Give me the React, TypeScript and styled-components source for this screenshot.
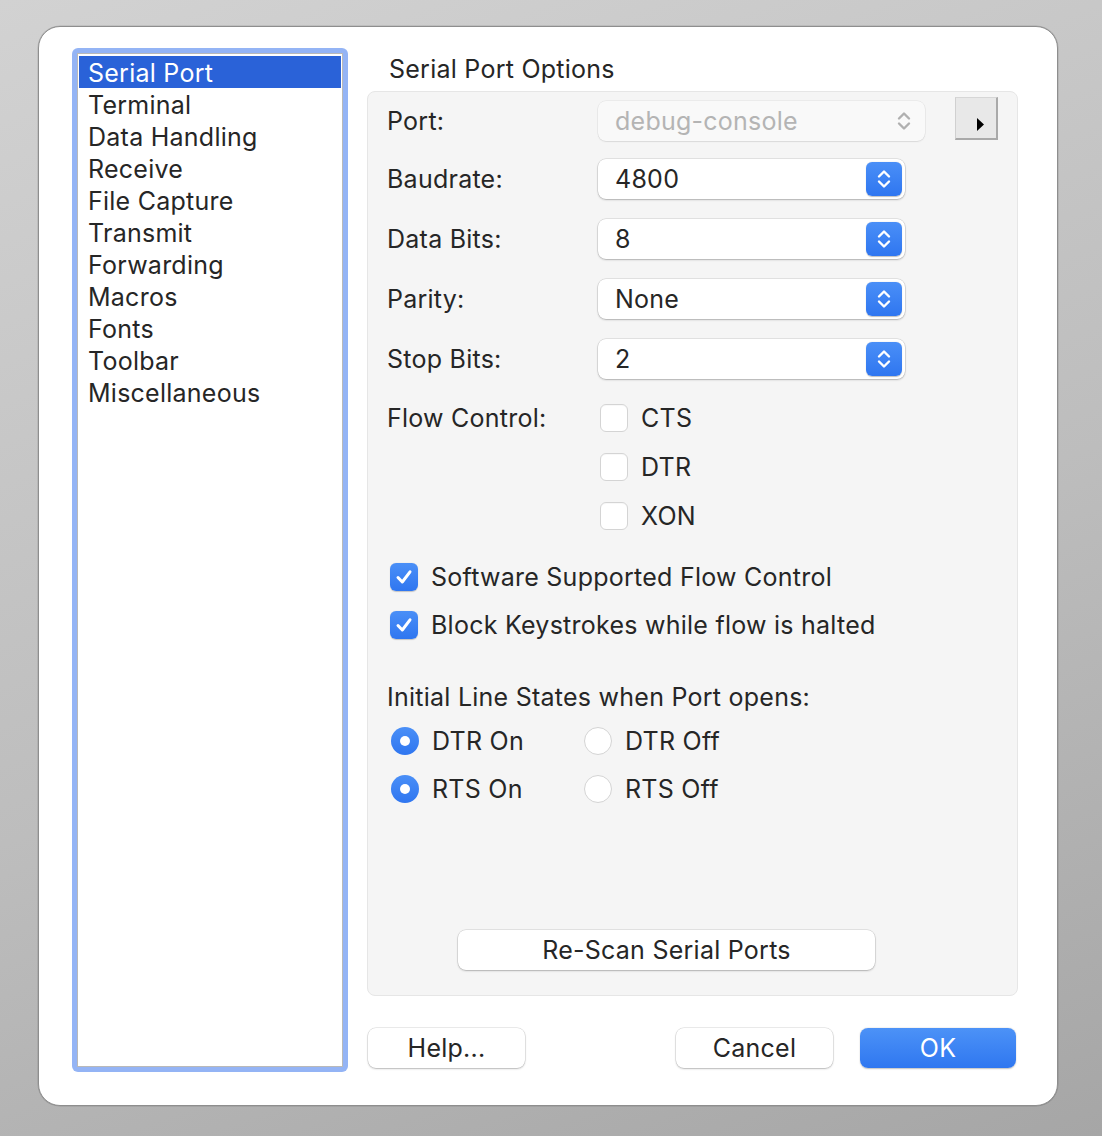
import React from "react"
import styled, { createGlobalStyle } from "styled-components"

const GlobalStyle = createGlobalStyle`
  html, body {
    margin: 0;
    padding: 0;
  }
  body {
    width: 1102px;
    height: 1136px;
    overflow: hidden;
    background: linear-gradient(160deg, #d2d2d2 0%, #bdbdbd 55%, #a6a6a6 100%);
    font-family: Inter, "Noto Sans", "Liberation Sans", sans-serif;
    letter-spacing: 0.25px;
    color: #262626;
  }
`

const Page = styled.div`
  padding: 26px 0 0 38px;
`

const Window = styled.div`
  box-sizing: border-box;
  width: 1020px;
  height: 1080px;
  background: #ffffff;
  border: 1px solid #8e8e8e;
  border-radius: 22px;
  padding: 21px 39px 33px 33px;
  display: flex;
  gap: 19px;
  box-shadow: 0 0 0 0.5px rgba(0, 0, 0, 0.15);
`

const SideRing = styled.div`
  box-sizing: border-box;
  width: 276px;
  height: 1024px;
  padding: 5px;
  border-radius: 6px;
  background: #94b4f5;
`

const SideList = styled.ul`
  box-sizing: border-box;
  height: 100%;
  margin: 0;
  padding: 2px 1px 1px;
  list-style: none;
  background: #ffffff;
  border: 1px solid #b9b9b9;
`

const SideItem = styled.li<{ selected?: boolean }>`
  box-sizing: border-box;
  height: 32px;
  line-height: 32px;
  padding: 1px 0 0 9px;
  font-size: 25px;
  background: ${p => (p.selected ? "#2a62d8" : "transparent")};
  color: ${p => (p.selected ? "#ffffff" : "#262626")};
  white-space: nowrap;
`

const Main = styled.div`
  width: 651px;
  display: flex;
  flex-direction: column;
`

const Title = styled.div`
  margin: 6px 0 7px 22px;
  height: 30px;
  line-height: 30px;
  font-size: 25px;
`

const Group = styled.div`
  box-sizing: border-box;
  height: 905px;
  background: #f5f5f5;
  border: 1px solid #e6e6e6;
  border-radius: 8px;
  display: flex;
  flex-direction: column;
  padding: 0 19px 25px 0;
`

const FormRow = styled.div<{ h?: number; top?: boolean }>`
  display: flex;
  align-items: ${p => (p.top ? "flex-start" : "center")};
  height: ${p => (p.h ? `${p.h}px` : "auto")};
  margin-top: ${p => (p.top ? "15px" : "0")};
`

const Label = styled.div`
  width: 230px;
  padding-left: 19px;
  box-sizing: border-box;
  font-size: 25px;
  line-height: 28px;
  flex-shrink: 0;
`

const Popup = styled.div<{ disabled?: boolean; w: number }>`
  box-sizing: border-box;
  width: ${p => p.w}px;
  height: 40px;
  border-radius: 8px;
  background: ${p => (p.disabled ? "#f9f9f9" : "#ffffff")};
  box-shadow: ${p =>
    p.disabled
      ? "0 0 0 0.5px rgba(0,0,0,0.08), 0 1px 1.5px rgba(0,0,0,0.08)"
      : "0 0 0 0.5px rgba(0,0,0,0.15), 0 1px 2px rgba(0,0,0,0.22)"};
  display: flex;
  align-items: center;
  padding: 0 3px 0 17px;
  font-size: 25px;
  color: ${p => (p.disabled ? "#b4b4b4" : "#262626")};
`

const PopupText = styled.span`
  flex: 1;
`

const Stepper = styled.span<{ disabled?: boolean }>`
  width: 36px;
  height: 34px;
  border-radius: 6px;
  display: flex;
  align-items: center;
  justify-content: center;
  background: ${p =>
    p.disabled ? "transparent" : "linear-gradient(#4a8ff7, #2f76f0)"};
  box-shadow: ${p => (p.disabled ? "none" : "0 0.5px 1px rgba(0,0,0,0.25)")};
`

const DisclosureButton = styled.div`
  box-sizing: border-box;
  width: 43px;
  height: 43px;
  margin-left: 30px;
  align-self: flex-start;
  margin-top: 5px;
  background: #e8e8e8;
  border-top: 1px solid #d6d6d6;
  border-left: 1px solid #d0d0d0;
  border-right: 2px solid #a9a9a9;
  border-bottom: 2px solid #a9a9a9;
  display: flex;
  align-items: flex-end;
  justify-content: flex-end;
  padding: 0 11px 7px 0;
`

const FlowList = styled.div`
  display: flex;
  flex-direction: column;
  gap: 21px;
  padding-left: 2px;
`

const CheckLine = styled.label`
  display: flex;
  align-items: center;
  gap: 13px;
  font-size: 25px;
  height: 28px;
`

const Box = styled.span<{ checked?: boolean }>`
  box-sizing: border-box;
  width: 28px;
  height: 28px;
  border-radius: 6px;
  flex-shrink: 0;
  display: flex;
  align-items: center;
  justify-content: center;
  background: ${p => (p.checked ? "linear-gradient(#4a8ff7, #2f76f0)" : "#ffffff")};
  border: ${p => (p.checked ? "none" : "1px solid #d4d4d4")};
  box-shadow: ${p =>
    p.checked ? "0 0.5px 1px rgba(0,0,0,0.2)" : "inset 0 1px 1px rgba(0,0,0,0.03)"};
`

const OptionBlock = styled.div`
  display: flex;
  flex-direction: column;
  gap: 20px;
  padding-left: 22px;
  margin-top: 33px;
`

const SubHeading = styled.div`
  margin: 43px 0 0 19px;
  height: 30px;
  line-height: 30px;
  font-size: 25px;
`

const RadioGrid = styled.div`
  display: grid;
  grid-template-columns: 193px auto;
  row-gap: 20px;
  padding-left: 23px;
  margin-top: 15px;
`

const RadioLine = styled.label`
  display: flex;
  align-items: center;
  gap: 13px;
  height: 28px;
  font-size: 25px;
`

const Radio = styled.span<{ on?: boolean }>`
  box-sizing: border-box;
  width: 28px;
  height: 28px;
  border-radius: 50%;
  flex-shrink: 0;
  display: flex;
  align-items: center;
  justify-content: center;
  background: ${p => (p.on ? "linear-gradient(#4a8ff7, #2f76f0)" : "#ffffff")};
  border: ${p => (p.on ? "none" : "1px solid #d4d4d4")};
  &::after {
    content: "";
    display: ${p => (p.on ? "block" : "none")};
    width: 10px;
    height: 10px;
    border-radius: 50%;
    background: #ffffff;
  }
`

const PushButton = styled.button<{ primary?: boolean; w: number }>`
  box-sizing: border-box;
  width: ${p => p.w}px;
  height: 40px;
  border: none;
  border-radius: 8px;
  font-family: inherit;
  letter-spacing: inherit;
  font-size: 25px;
  padding: 0;
  color: ${p => (p.primary ? "#ffffff" : "#262626")};
  background: ${p => (p.primary ? "linear-gradient(#4c92f7, #2f77f0)" : "#ffffff")};
  box-shadow: ${p =>
    p.primary
      ? "0 0.5px 1.5px rgba(0,0,0,0.25)"
      : "0 0 0 0.5px rgba(0,0,0,0.15), 0 1px 2px rgba(0,0,0,0.22)"};
`

const RescanWrap = styled.div`
  margin-top: auto;
  padding-left: 90px;
`

const Footer = styled.div`
  display: flex;
  align-items: center;
  margin-top: 32px;
  padding-left: 1px;
  padding-right: 2px;
  gap: 27px;
`

const Spacer = styled.div`
  flex: 1;
`

const Chevrons = ({ color }: { color: string }) => (
  <svg width="16" height="24" viewBox="0 0 16 24">
    <path
      d="M3 9.5 L8 4.5 L13 9.5 M3 14.5 L8 19.5 L13 14.5"
      fill="none"
      stroke={color}
      strokeWidth="2.4"
      strokeLinecap="round"
      strokeLinejoin="round"
    />
  </svg>
)

const Check = () => (
  <svg width="20" height="20" viewBox="0 0 20 20">
    <path
      d="M4 10.5 L8.3 15 L16 4.8"
      fill="none"
      stroke="#ffffff"
      strokeWidth="3"
      strokeLinecap="round"
      strokeLinejoin="round"
    />
  </svg>
)

const sections = [
  "Serial Port",
  "Terminal",
  "Data Handling",
  "Receive",
  "File Capture",
  "Transmit",
  "Forwarding",
  "Macros",
  "Fonts",
  "Toolbar",
  "Miscellaneous",
]

const selects = [
  { label: "Baudrate:", value: "4800" },
  { label: "Data Bits:", value: "8" },
  { label: "Parity:", value: "None" },
  { label: "Stop Bits:", value: "2" },
]

export default function App() {
  return (
    <Page>
      <GlobalStyle />
      <Window>
        <SideRing>
          <SideList>
            {sections.map((s, i) => (
              <SideItem key={s} selected={i === 0}>
                {s}
              </SideItem>
            ))}
          </SideList>
        </SideRing>
        <Main>
          <Title>Serial Port Options</Title>
          <Group>
            <FormRow h={57}>
              <Label>Port:</Label>
              <Popup disabled w={327}>
                <PopupText>debug-console</PopupText>
                <Stepper disabled>
                  <Chevrons color="#b0b0b0" />
                </Stepper>
              </Popup>
              <DisclosureButton>
                <svg width="9" height="13" viewBox="0 0 9 13">
                  <path d="M1 0 L8 6.5 L1 13 Z" fill="#000000" />
                </svg>
              </DisclosureButton>
            </FormRow>
            {selects.map(s => (
              <FormRow h={60} key={s.label}>
                <Label>{s.label}</Label>
                <Popup w={307}>
                  <PopupText>{s.value}</PopupText>
                  <Stepper>
                    <Chevrons color="#ffffff" />
                  </Stepper>
                </Popup>
              </FormRow>
            ))}
            <FormRow top>
              <Label>Flow Control:</Label>
              <FlowList>
                {["CTS", "DTR", "XON"].map(f => (
                  <CheckLine key={f}>
                    <Box />
                    {f}
                  </CheckLine>
                ))}
              </FlowList>
            </FormRow>
            <OptionBlock>
              <CheckLine>
                <Box checked>
                  <Check />
                </Box>
                Software Supported Flow Control
              </CheckLine>
              <CheckLine>
                <Box checked>
                  <Check />
                </Box>
                Block Keystrokes while flow is halted
              </CheckLine>
            </OptionBlock>
            <SubHeading>Initial Line States when Port opens:</SubHeading>
            <RadioGrid>
              <RadioLine>
                <Radio on />
                DTR On
              </RadioLine>
              <RadioLine>
                <Radio />
                DTR Off
              </RadioLine>
              <RadioLine>
                <Radio on />
                RTS On
              </RadioLine>
              <RadioLine>
                <Radio />
                RTS Off
              </RadioLine>
            </RadioGrid>
            <RescanWrap>
              <PushButton w={417}>Re-Scan Serial Ports</PushButton>
            </RescanWrap>
          </Group>
          <Footer>
            <PushButton w={157}>Help...</PushButton>
            <Spacer />
            <PushButton w={157}>Cancel</PushButton>
            <PushButton primary w={156}>
              OK
            </PushButton>
          </Footer>
        </Main>
      </Window>
    </Page>
  )
}
